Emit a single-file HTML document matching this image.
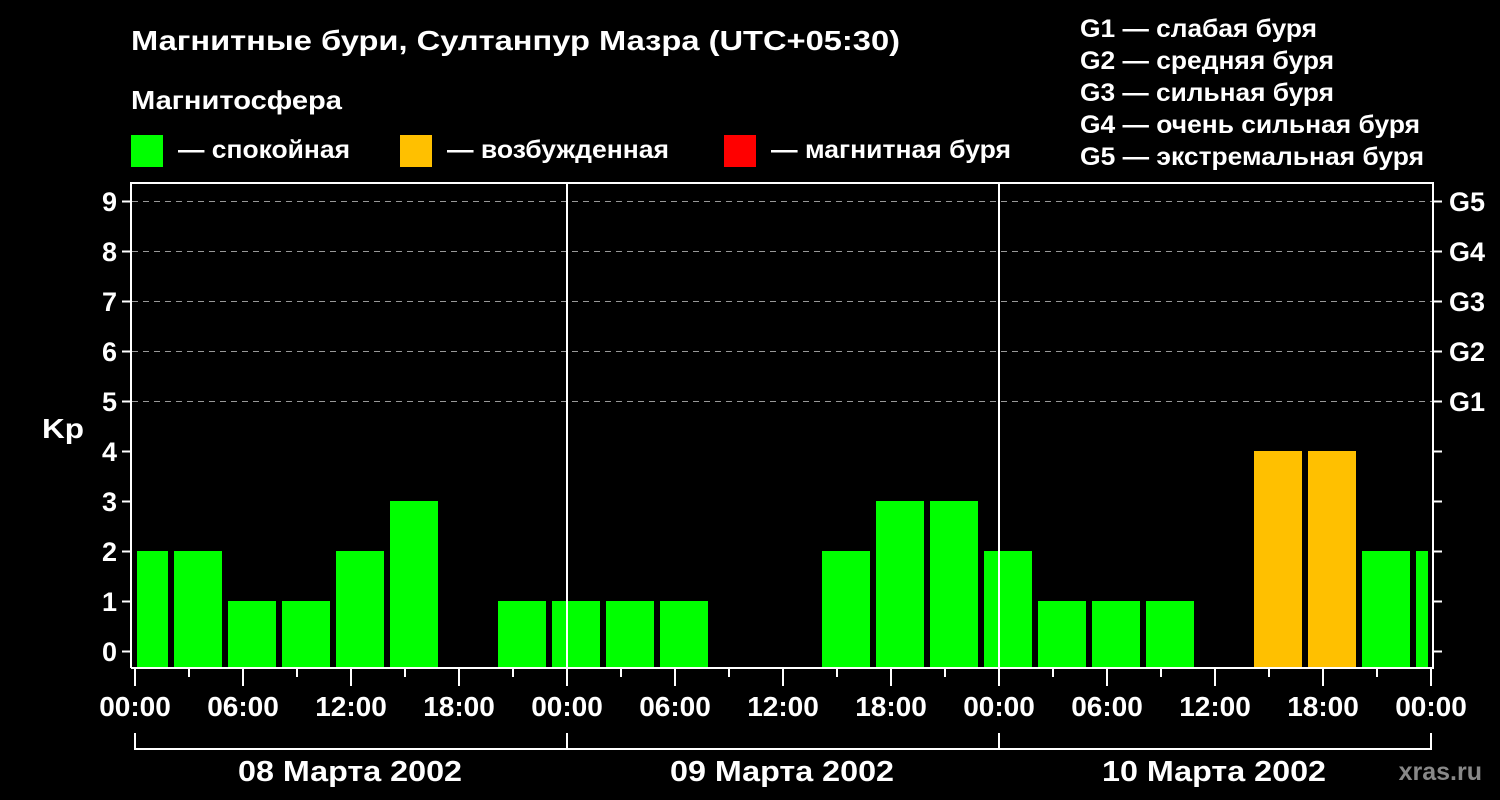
<!DOCTYPE html>
<html><head><meta charset="utf-8"><style>
html,body{margin:0;padding:0;background:#000;width:1500px;height:800px;overflow:hidden}
svg{display:block}
text{font-family:"Liberation Sans",Arial,sans-serif;font-weight:bold;fill:#fff}
</style></head><body>
<svg width="1500" height="800" viewBox="0 0 1500 800">
<text x="131" y="50" font-size="28" textLength="769" lengthAdjust="spacingAndGlyphs">Магнитные бури, Султанпур Мазра (UTC+05:30)</text>
<text x="131" y="109" font-size="26" textLength="211" lengthAdjust="spacingAndGlyphs">Магнитосфера</text>
<rect x="131" y="135" width="32" height="32" fill="#00ff00"/>
<text x="178" y="158" font-size="25" textLength="172" lengthAdjust="spacingAndGlyphs">— спокойная</text>
<rect x="400" y="135" width="32" height="32" fill="#ffc000"/>
<text x="447" y="158" font-size="25" textLength="222" lengthAdjust="spacingAndGlyphs">— возбужденная</text>
<rect x="724" y="135" width="32" height="32" fill="#ff0000"/>
<text x="771" y="158" font-size="25" textLength="240" lengthAdjust="spacingAndGlyphs">— магнитная буря</text>
<g font-size="25">
<text x="1080" y="37" textLength="237" lengthAdjust="spacingAndGlyphs">G1 — слабая буря</text>
<text x="1080" y="69" textLength="254" lengthAdjust="spacingAndGlyphs">G2 — средняя буря</text>
<text x="1080" y="101" textLength="254" lengthAdjust="spacingAndGlyphs">G3 — сильная буря</text>
<text x="1080" y="133" textLength="340" lengthAdjust="spacingAndGlyphs">G4 — очень сильная буря</text>
<text x="1080" y="165" textLength="344" lengthAdjust="spacingAndGlyphs">G5 — экстремальная буря</text>
</g>
<g stroke="#999" stroke-width="1" stroke-dasharray="6,5">
<line x1="132" y1="201.5" x2="1432" y2="201.5"/>
<line x1="132" y1="251.5" x2="1432" y2="251.5"/>
<line x1="132" y1="301.5" x2="1432" y2="301.5"/>
<line x1="132" y1="351.5" x2="1432" y2="351.5"/>
<line x1="132" y1="401.5" x2="1432" y2="401.5"/>
</g>
<g fill="#00ff00">
<rect x="137" y="551" width="31" height="117"/>
<rect x="174" y="551" width="48" height="117"/>
<rect x="228" y="601" width="48" height="67"/>
<rect x="282" y="601" width="48" height="67"/>
<rect x="336" y="551" width="48" height="117"/>
<rect x="390" y="501" width="48" height="167"/>
<rect x="498" y="601" width="48" height="67"/>
<rect x="552" y="601" width="48" height="67"/>
<rect x="606" y="601" width="48" height="67"/>
<rect x="660" y="601" width="48" height="67"/>
<rect x="822" y="551" width="48" height="117"/>
<rect x="876" y="501" width="48" height="167"/>
<rect x="930" y="501" width="48" height="167"/>
<rect x="984" y="551" width="48" height="117"/>
<rect x="1038" y="601" width="48" height="67"/>
<rect x="1092" y="601" width="48" height="67"/>
<rect x="1146" y="601" width="48" height="67"/>
<rect x="1362" y="551" width="48" height="117"/>
<rect x="1416" y="551" width="12" height="117"/>
</g>
<g fill="#ffc000">
<rect x="1254" y="451" width="48" height="217"/>
<rect x="1308" y="451" width="48" height="217"/>
</g>
<g stroke="#fff" stroke-width="2" fill="none">
<path d="M131 668V183H1433V668H131"/>
<line x1="567" y1="183" x2="567" y2="668"/>
<line x1="999" y1="183" x2="999" y2="668"/>
<path d="M122 201.5h9M122 251.5h9M122 301.5h9M122 351.5h9M122 401.5h9M122 451.5h9M122 501.5h9M122 551.5h9M122 601.5h9M122 651.5h9"/>
<path d="M1433 201.5h9M1433 251.5h9M1433 301.5h9M1433 351.5h9M1433 401.5h9M1433 451.5h9M1433 501.5h9M1433 551.5h9M1433 601.5h9M1433 651.5h9"/>
<path d="M135 669v17M243 669v17M351 669v17M459 669v17M567 669v17M675 669v17M783 669v17M891 669v17M999 669v17M1107 669v17M1215 669v17M1323 669v17M1431 669v17"/>
<path d="M189 669v8M297 669v8M405 669v8M513 669v8M621 669v8M729 669v8M837 669v8M945 669v8M1053 669v8M1161 669v8M1269 669v8M1377 669v8"/>
<path d="M135 733v16H1431V733M567 733v16M999 733v16"/>
</g>
<g font-size="27" text-anchor="end">
<text x="117" y="211">9</text><text x="117" y="261">8</text><text x="117" y="311">7</text><text x="117" y="361">6</text><text x="117" y="411">5</text><text x="117" y="461">4</text><text x="117" y="511">3</text><text x="117" y="561">2</text><text x="117" y="611">1</text><text x="117" y="661">0</text>
</g>
<text x="42" y="438" font-size="28" textLength="42" lengthAdjust="spacingAndGlyphs">Kp</text>
<g font-size="27">
<text x="1449" y="211">G5</text><text x="1449" y="261">G4</text><text x="1449" y="311">G3</text><text x="1449" y="361">G2</text><text x="1449" y="411">G1</text>
</g>
<g font-size="28" text-anchor="middle">
<text x="135" y="716">00:00</text><text x="243" y="716">06:00</text><text x="351" y="716">12:00</text><text x="459" y="716">18:00</text>
<text x="567" y="716">00:00</text><text x="675" y="716">06:00</text><text x="783" y="716">12:00</text><text x="891" y="716">18:00</text>
<text x="999" y="716">00:00</text><text x="1107" y="716">06:00</text><text x="1215" y="716">12:00</text><text x="1323" y="716">18:00</text>
<text x="1431" y="716">00:00</text>
</g>
<g font-size="29">
<text x="238" y="781" textLength="224" lengthAdjust="spacingAndGlyphs">08 Марта 2002</text>
<text x="670" y="781" textLength="224" lengthAdjust="spacingAndGlyphs">09 Марта 2002</text>
<text x="1102" y="781" textLength="224" lengthAdjust="spacingAndGlyphs">10 Марта 2002</text>
</g>
<text x="1482" y="780" font-size="25" text-anchor="end" style="fill:#888">xras.ru</text>
</svg>
</body></html>
